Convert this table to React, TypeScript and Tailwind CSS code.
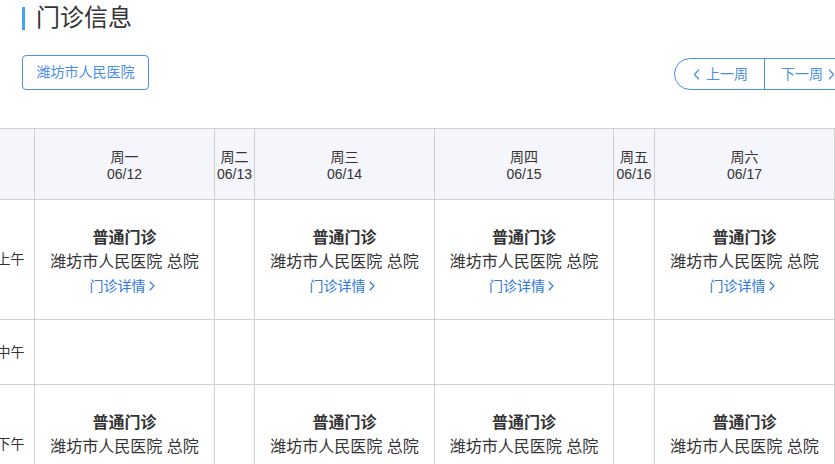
import { ChevronLeft, ChevronRight } from 'lucide-react';

type Day = { week: string; date: string; wide: number; am: boolean; pm: boolean };

const days: Day[] = [
  { week: '周一', date: '06/12', wide: 180, am: true, pm: true },
  { week: '周二', date: '06/13', wide: 40, am: false, pm: false },
  { week: '周三', date: '06/14', wide: 180, am: true, pm: true },
  { week: '周四', date: '06/15', wide: 179, am: true, pm: true },
  { week: '周五', date: '06/16', wide: 41, am: false, pm: false },
  { week: '周六', date: '06/17', wide: 180, am: true, pm: true },
  { week: '周日', date: '06/18', wide: 40, am: false, pm: false },
];

const font = 'font-["Liberation_Sans","Noto_Sans_CJK_SC",sans-serif]';

function Clinic({ detail = true }: { detail?: boolean }) {
  return (
    <div className="flex flex-col items-center pt-[26px] leading-[24px] whitespace-nowrap">
      <div className="text-[16px] font-bold text-[#333]">普通门诊</div>
      <div className="text-[16px] text-[#333]">潍坊市人民医院 总院</div>
      {detail && (
        <a className="flex items-center text-[14px] text-[#2a78e0]">
          门诊详情
          <ChevronRight className="h-[16px] w-[16px] -ml-[2px]" strokeWidth={1.6} />
        </a>
      )}
    </div>
  );
}

export default function App() {
  return (
    <div className={`w-[835px] h-[464px] overflow-hidden bg-white ${font}`}>
      <div className="w-[878px]">
        {/* 标题 */}
        <div className="flex items-center h-[35px] pl-[22px] pt-[1px]">
          <span className="h-[23px] w-[3px] bg-[#42a0f5]" />
          <h2 className="ml-[11px] text-[24px] leading-[24px] text-[#333]">门诊信息</h2>
        </div>

        {/* 医院 + 周切换 */}
        <div className="flex items-start justify-between px-[22px] mt-[20px]">
          <button className="h-[35px] w-[127px] rounded-[4px] border border-[#4a90e8] text-[14px] text-[#4a8fe8]">
            潍坊市人民医院
          </button>
          <div className="mt-[3px] flex h-[32px] rounded-full border border-[#4a90e8] text-[14px] text-[#4a8fe8]">
            <button className="flex w-[89px] items-center pl-[13px]">
              <ChevronLeft className="h-[17px] w-[17px]" strokeWidth={1.8} />
              <span className="ml-[1px]">上一周</span>
            </button>
            <span className="w-px bg-[#4a90e8]" />
            <button className="flex w-[90px] items-center pl-[16px]">
              <span>下一周</span>
              <ChevronRight className="h-[17px] w-[17px]" strokeWidth={1.8} />
            </button>
          </div>
        </div>

        {/* 排班表 */}
        <div className="mt-[38px] -ml-[13px] flex border-t border-[#d0d0d0] text-[#333]">
          <div className="flex w-[48px] shrink-0 flex-col border-r border-[#d0d0d0]">
            <div className="h-[71px] border-b border-[#d0d0d0] bg-[#f5f6fb]" />
            <div className="flex h-[120px] items-center justify-center border-b border-[#d0d0d0] text-[14px]">上午</div>
            <div className="flex h-[65px] items-center justify-center border-b border-[#d0d0d0] text-[14px]">中午</div>
            <div className="flex h-[120px] items-center justify-center border-b border-[#d0d0d0] text-[14px]">下午</div>
          </div>
          {days.map((d) => (
            <div
              key={d.week}
              style={{ width: d.wide }}
              className="flex shrink-0 flex-col border-r border-[#d0d0d0]"
            >
              <div className="flex h-[71px] flex-col items-center justify-center border-b border-[#d0d0d0] bg-[#f5f6fb] pt-[3px] text-[14px] leading-[17px]">
                <span>{d.week}</span>
                <span>{d.date}</span>
              </div>
              <div className="h-[120px] border-b border-[#d0d0d0]">{d.am && <Clinic />}</div>
              <div className="h-[65px] border-b border-[#d0d0d0]" />
              <div className="h-[120px] border-b border-[#d0d0d0]">{d.pm && <Clinic />}</div>
            </div>
          ))}
        </div>
      </div>
    </div>
  );
}
